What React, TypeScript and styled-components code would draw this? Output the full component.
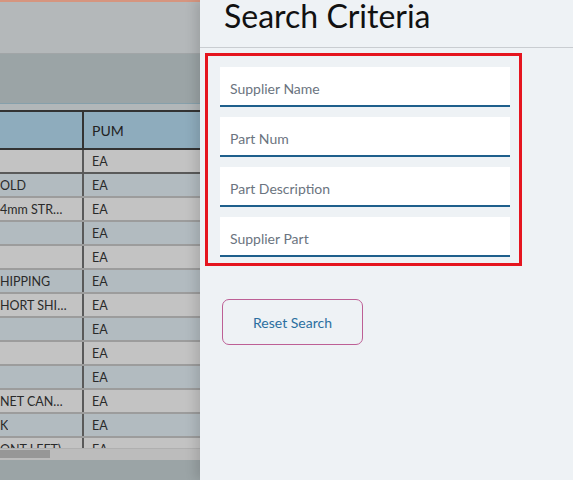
import styled, { createGlobalStyle } from "styled-components";

const GlobalStyle = createGlobalStyle`
  html, body {
    margin: 0;
    padding: 0;
    background: #eef2f5;
  }
  body {
    font-family: "Source Sans Pro", Lato, "Noto Sans", sans-serif;
    overflow: hidden;
  }
  * {
    box-sizing: border-box;
  }
`;

const Screen = styled.div`
  display: flex;
  width: 573px;
  height: 480px;
  overflow: hidden;
`;

/* page behind the drawer, already dimmed */
const Page = styled.div`
  width: 200px;
  flex-shrink: 0;
  display: flex;
  flex-direction: column;
  overflow: hidden;
  border-top: 2px solid #d6957f;
`;

const PageHeader = styled.div`
  height: 52px;
  background: #b4b8ba;
  border-bottom: 1px solid #a1a5a7;
`;

const ToolBand = styled.div`
  height: 50px;
  background: #9ba4a6;
  border-bottom: 1px solid #86a0ab;
`;

const Spacer = styled.div`
  height: 6px;
  background: #b2b7b9;
`;

const TableWrap = styled.div`
  height: 350px;
  display: flex;
  flex-direction: column;
  overflow: hidden;
  background: #c3c3c3;
`;

const HeadRow = styled.div`
  display: grid;
  grid-template-columns: 82px 1fr;
  height: 40px;
  flex-shrink: 0;
  background: #8eacbd;
  border-top: 2px solid #333;
  border-bottom: 2px solid #333;
`;

const HeadCell = styled.div`
  display: flex;
  align-items: center;
  padding-left: 8px;
  font-size: 14px;
  color: #222;
  & + & {
    border-left: 2px solid #333;
  }
`;

const Rows = styled.div`
  flex: 1;
  overflow: hidden;
`;

const Row = styled.div<{ $alt: boolean; $active?: boolean }>`
  display: grid;
  grid-template-columns: 82px 1fr;
  height: 24px;
  background: ${(p) => (p.$alt ? "#b2bbc0" : "#c3c3c3")};
  border-bottom: 2px solid ${(p) => (p.$active ? "#5a5a5a" : "#9c9c9c")};
`;

const Cell = styled.div<{ $active?: boolean }>`
  display: flex;
  align-items: center;
  min-width: 0;
  font-size: 12.5px;
  color: #2a2a2a;
  white-space: nowrap;
  overflow: hidden;
  & + & {
    padding-left: 8px;
    border-left: 2px solid ${(p) => (p.$active ? "#5a5a5a" : "#9c9c9c")};
  }
`;

const Clip = styled.span`
  display: block;
  max-width: 70px;
  overflow: hidden;
  text-overflow: ellipsis;
`;

const HScroll = styled.div`
  height: 12px;
  flex-shrink: 0;
  background: #bcbcbc;
  border-top: 1px solid #b0b0b0;
  padding-top: 1px;
`;

const Thumb = styled.div`
  width: 50px;
  height: 8px;
  background: #979797;
`;

const PageFooter = styled.div`
  flex: 1;
  background: #9ba4a6;
`;

/* search drawer */
const Panel = styled.aside`
  flex: 1;
  display: flex;
  flex-direction: column;
  background: #eef2f5;
  box-shadow: -5px 0 10px rgba(0, 0, 0, 0.12);
  position: relative;
  z-index: 1;
`;

const Title = styled.h1`
  margin: 0;
  height: 48px;
  padding-left: 24px;
  font-size: 32px;
  font-weight: 400;
  line-height: 32px;
  color: #111;
  border-bottom: 1px solid #c9cdd1;
`;

const Criteria = styled.div`
  margin: 5px 51px 0 5px;
  padding: 11px 9px 6px 12px;
  border: 3px solid #e5151f;
  display: flex;
  flex-direction: column;
  gap: 10px;
`;

const Field = styled.input`
  height: 40px;
  border: none;
  border-bottom: 2px solid #1e5f8c;
  background: #fff;
  padding: 4px 10px 0;
  font-family: inherit;
  font-size: 14px;
  color: #333;
  outline: none;
  &::placeholder {
    color: #6b7480;
  }
`;

const ResetButton = styled.button`
  margin: 33px 0 0 22px;
  width: 141px;
  height: 46px;
  border: 1px solid #bd5f95;
  border-radius: 7px;
  background: transparent;
  font-family: inherit;
  font-size: 14px;
  color: #2b6fa0;
  cursor: pointer;
`;

const rows = [
  "",
  "OLD",
  "4mm STRAP ROLL",
  "",
  "",
  "HIPPING",
  "HORT SHIPPING",
  "",
  "",
  "",
  "NET CANNISTER",
  "K",
  "ONT LEFT)",
];

function App() {
  return (
    <>
      <GlobalStyle />
      <Screen>
        <Page>
          <PageHeader />
          <ToolBand />
          <Spacer />
          <TableWrap>
            <HeadRow>
              <HeadCell />
              <HeadCell>PUM</HeadCell>
            </HeadRow>
            <Rows>
              {rows.map((desc, i) => (
                <Row key={i} $alt={i % 2 === 1} $active={i === 0}>
                  <Cell>
                    <Clip>{desc}</Clip>
                  </Cell>
                  <Cell $active={i === 0}>EA</Cell>
                </Row>
              ))}
            </Rows>
            <HScroll>
              <Thumb />
            </HScroll>
          </TableWrap>
          <PageFooter />
        </Page>
        <Panel>
          <Title>Search Criteria</Title>
          <Criteria>
            <Field placeholder="Supplier Name" />
            <Field placeholder="Part Num" />
            <Field placeholder="Part Description" />
            <Field placeholder="Supplier Part" />
          </Criteria>
          <div>
            <ResetButton>Reset Search</ResetButton>
          </div>
        </Panel>
      </Screen>
    </>
  );
}

export default App;
